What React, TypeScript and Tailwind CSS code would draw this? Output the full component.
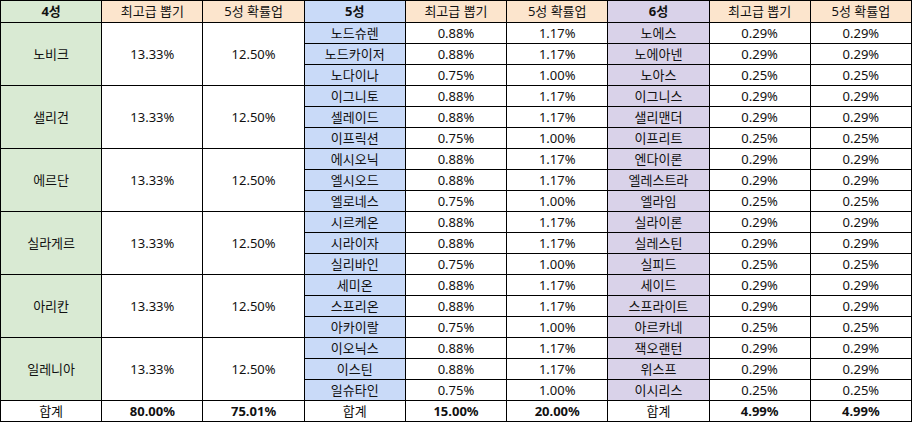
import React from "react";

interface Group {
  name: string;
  five: string[];
  six: string[];
}

const groups: Group[] = [
  { name: "노비크", five: ["노드슈렌", "노드카이저", "노다이나"], six: ["노에스", "노에아넨", "노아스"] },
  { name: "샐리건", five: ["이그니토", "셀레이드", "이프릭션"], six: ["이그니스", "샐리맨더", "이프리트"] },
  { name: "에르단", five: ["에시오닉", "엘시오드", "엘로네스"], six: ["엔다이론", "엘레스트라", "엘라임"] },
  { name: "실라게르", five: ["시르케온", "시라이자", "실리바인"], six: ["실라이론", "실레스틴", "실피드"] },
  { name: "아리칸", five: ["세미온", "스프리온", "아카이랄"], six: ["세이드", "스프라이트", "아르카네"] },
  { name: "일레니아", five: ["이오닉스", "이스틴", "일슈타인"], six: ["잭오랜턴", "위스프", "이시리스"] },
];

const fiveRates = [
  ["0.88%", "1.17%"],
  ["0.88%", "1.17%"],
  ["0.75%", "1.00%"],
];
const sixRates = [
  ["0.29%", "0.29%"],
  ["0.29%", "0.29%"],
  ["0.25%", "0.25%"],
];

const cell = "border border-black text-center align-middle p-0 leading-none";

const App: React.FC = () => {
  return (
    <div
      className="w-[912px] h-[423px] bg-white text-[13px] text-[#111]"
      style={{ fontFamily: '"Noto Sans", "Noto Sans CJK KR", sans-serif' }}
    >
      <table className="w-[912px] table-fixed border-collapse">
        <tbody>
          <tr className="h-[22px]">
            <td className={`${cell} bg-[#d9ead3] font-bold`}>4성</td>
            <td className={`${cell} bg-[#fce5cd]`}>최고급 뽑기</td>
            <td className={`${cell} bg-[#fce5cd]`}>5성 확률업</td>
            <td className={`${cell} bg-[#c9daf8] font-bold`}>5성</td>
            <td className={`${cell} bg-[#fce5cd]`}>최고급 뽑기</td>
            <td className={`${cell} bg-[#fce5cd]`}>5성 확률업</td>
            <td className={`${cell} bg-[#d9d2e9] font-bold`}>6성</td>
            <td className={`${cell} bg-[#fce5cd]`}>최고급 뽑기</td>
            <td className={`${cell} bg-[#fce5cd]`}>5성 확률업</td>
          </tr>
          {groups.map((g) =>
            g.five.map((five, i) => (
              <tr key={five} className="h-[21px]">
                {i === 0 && (
                  <>
                    <td rowSpan={3} className={`${cell} bg-[#d9ead3]`}>
                      {g.name}
                    </td>
                    <td rowSpan={3} className={cell}>
                      13.33%
                    </td>
                    <td rowSpan={3} className={cell}>
                      12.50%
                    </td>
                  </>
                )}
                <td className={`${cell} bg-[#c9daf8]`}>{five}</td>
                <td className={cell}>{fiveRates[i][0]}</td>
                <td className={cell}>{fiveRates[i][1]}</td>
                <td className={`${cell} bg-[#d9d2e9]`}>{g.six[i]}</td>
                <td className={cell}>{sixRates[i][0]}</td>
                <td className={cell}>{sixRates[i][1]}</td>
              </tr>
            ))
          )}
          <tr className="h-[21px]">
            <td className={cell}>합계</td>
            <td className={`${cell} font-bold`}>80.00%</td>
            <td className={`${cell} font-bold`}>75.01%</td>
            <td className={cell}>합계</td>
            <td className={`${cell} font-bold`}>15.00%</td>
            <td className={`${cell} font-bold`}>20.00%</td>
            <td className={cell}>합계</td>
            <td className={`${cell} font-bold`}>4.99%</td>
            <td className={`${cell} font-bold`}>4.99%</td>
          </tr>
        </tbody>
      </table>
    </div>
  );
};

export default App;
